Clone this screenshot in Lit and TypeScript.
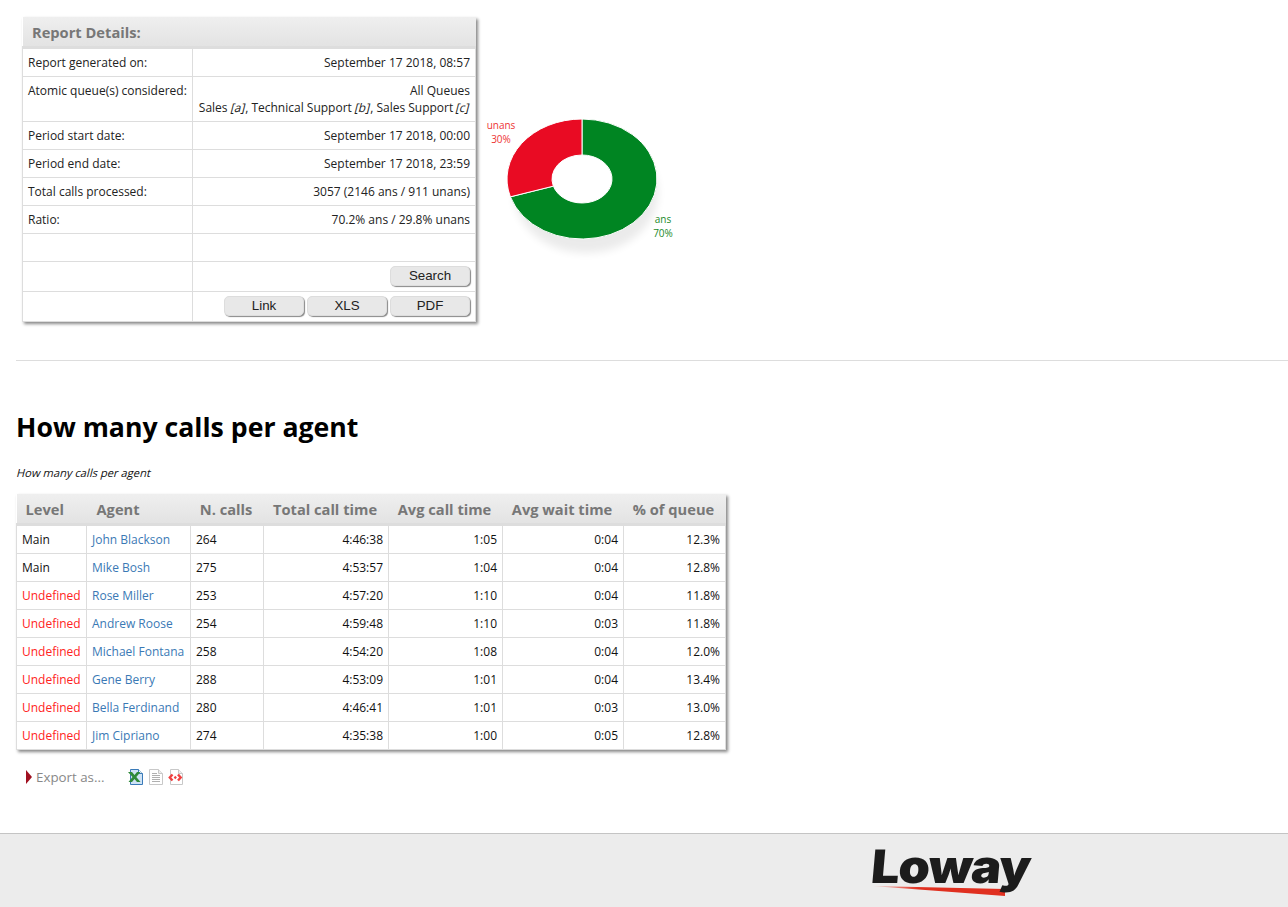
import { LitElement, html, css, svg } from "lit";
import { customElement } from "lit/decorators.js";

const details = [
  ["Report generated on:", "September 17 2018, 08:57"],
  ["Period start date:", "September 17 2018, 00:00"],
  ["Period end date:", "September 17 2018, 23:59"],
  ["Total calls processed:", "3057 (2146 ans / 911 unans)"],
  ["Ratio:", "70.2% ans / 29.8% unans"],
];
const agents = [
  ["Main", "John Blackson", "264", "4:46:38", "1:05", "0:04", "12.3%"],
  ["Main", "Mike Bosh", "275", "4:53:57", "1:04", "0:04", "12.8%"],
  ["Undefined", "Rose Miller", "253", "4:57:20", "1:10", "0:04", "11.8%"],
  ["Undefined", "Andrew Roose", "254", "4:59:48", "1:10", "0:03", "11.8%"],
  ["Undefined", "Michael Fontana", "258", "4:54:20", "1:08", "0:04", "12.0%"],
  ["Undefined", "Gene Berry", "288", "4:53:09", "1:01", "0:04", "13.4%"],
  ["Undefined", "Bella Ferdinand", "280", "4:46:41", "1:01", "0:03", "13.0%"],
  ["Undefined", "Jim Cipriano", "274", "4:35:38", "1:00", "0:05", "12.8%"],
];

@customElement("app-root")
export class AppRoot extends LitElement {
  static styles = css`
    :host { display: block; font-family: "Open Sans", sans-serif; font-size: 12px; color: #222; background: #fff; min-height: 907px; position: relative; }
    .top { display: flex; align-items: flex-start; padding: 17px 0 0 22px; height: 360px; box-sizing: border-box; }
    table { border-collapse: collapse; table-layout: fixed; box-shadow: 2px 2px 3px #888; background: #fff; }
    .report { width: 454px; flex: none; }
    .report .c1 { width: 170px; }
    th { background: linear-gradient(#efefef, #e3e3e3); color: #777; font-weight: 700; border-bottom: 3px solid #ddd; text-align: left; padding: 0; }
    td { border: 1px solid #ddd; padding: 0 5px; height: 27px; line-height: 17px; box-sizing: content-box; }
    .report th { font-size: 14.67px; height: 29px; padding-left: 9.500px; }
    .report td { vertical-align: middle; }
    .report .multi td { height: 44px; vertical-align: top; }
    .multi .inner { padding-top: 5px; }
    .r { text-align: right; }
    .slant { display: inline-block; transform: skewX(-14deg); }
    .report td.btns { height: 27px; padding: 0 5px 2px 0; }
    .btnrow { display: flex; justify-content: flex-end; gap: 3px; }
    button { font-family: "Liberation Sans", sans-serif; font-size: 13.33px; color: #222; height: 20px; padding: 0; border: 1px solid #ddd; border-radius: 5px; background: #e8e8e8; box-shadow: 1px 1px 1px #888; width: 80px; line-height: 16px; }
    .chart { display: block; margin-left: 4px; margin-top: 83px; flex: none; }
    .chart text { font-family: "Open Sans", sans-serif; font-size: 10px; text-anchor: middle; }
    .unans { fill: #e33; }
    .ans { fill: #1a8a2a; }
    hr { border: 0; border-top: 1px solid #ddd; margin: 0 0 0 16px; }
    h2 { font-size: 26.67px; line-height: 36px; font-weight: 700; color: #000; margin: 48px 0 0 16px; }
    .sub { font-size: 11.2px; color: #111; margin: 20px 0 0 17px; line-height: 16px; }
    .agents { width: 709px; margin: 13px 0 0 16px; }
    .agents th { height: 29px; font-size: 14.67px; text-align: center; padding: 0 2px 0 0; }
    .agents th.left { text-align: left; padding: 0 0 0 10px; }
    .agents th.lvl { text-align: left; padding: 0 0 0 9px; }
    .agents td { color: #111; }
    .w1 { width: 70px; } .w2 { width: 104px; } .w3 { width: 73px; } .w4 { width: 125px; } .w5 { width: 114px; } .w6 { width: 121px; } .w7 { width: 102px; }
    .undef { color: #f22 !important; }
    a { color: #3a79b5; text-decoration: none; }
    .export { display: flex; align-items: center; margin: 17px 0 0 26px; height: 20px; color: #888; font-size: 13.33px; }
    .tri { width: 0; height: 0; border-left: 6px solid #a01020; border-top: 7px solid transparent; border-bottom: 7px solid transparent; margin-right: 4px; }
    .icons { display: flex; gap: 4px; margin-left: 24px; }
    .icons svg { display: block; }
    footer { position: absolute; left: 0; right: 0; top: 833px; height: 74px; box-sizing: border-box; background: #ececec; border-top: 1px solid #c4c4c4; padding-left: 870px; }
    .logo { position: relative; width: 170px; height: 70px; }
    .logo svg { position: absolute; left: 0; top: 0; }
    .logo span { position: absolute; left: -1px; top: 3px; font-family: "Inter", "Liberation Sans", sans-serif; font-weight: 900; font-size: 46px; line-height: 58px; letter-spacing: -1.2px; color: #1c1c1c; transform: skewX(-5deg) scaleX(1.1); transform-origin: 0 100%; }
  `;

  private donut() {
    const cx = 102, cy = 79;
    const pt = (t: number, rx: number, ry: number) => {
      const a = (t * Math.PI) / 180;
      return `${(cx + rx * Math.sin(a)).toFixed(2)} ${(cy - ry * Math.cos(a)).toFixed(2)}`;
    };
    const seg = (a: number, b: number, large: number) =>
      `M${pt(a, 75, 60)} A75 60 0 ${large} 1 ${pt(b, 75, 60)} L${pt(b, 30, 24)} A30 24 0 ${large} 0 ${pt(a, 30, 24)} Z`;
    const end = 252.7;
    return svg`
      <defs><filter id="b" x="-20%" y="-20%" width="140%" height="140%"><feGaussianBlur stdDeviation="4"/></filter></defs>
      <ellipse cx="${cx + 4}" cy="${cy + 14}" rx="72" ry="60" fill="#000" opacity=".08" filter="url(#b)"/>
      <ellipse cx="${cx}" cy="${cy}" rx="30" ry="24" fill="#fff"/>
      <path d="${seg(0, end, 1)}" fill="#008522" stroke="#fff" stroke-width="1"/>
      <path d="${seg(end, 360, 0)}" fill="#e90b23" stroke="#fff" stroke-width="1"/>
      <text class="unans" x="21" y="29">unans</text>
      <text class="unans" x="21" y="43">30%</text>
      <text class="ans" x="183" y="123">ans</text>
      <text class="ans" x="183" y="137">70%</text>
    `;
  }

  render() {
    return html`
      <div class="top">
        <table class="report">
          <colgroup><col class="c1" /><col /></colgroup>
          <tr><th colspan="2">Report Details:</th></tr>
          <tr><td>${details[0][0]}</td><td class="r">${details[0][1]}</td></tr>
          <tr class="multi">
            <td><div class="inner">Atomic queue(s) considered:</div></td>
            <td class="r"><div class="inner">All Queues<br />Sales <span class="slant">[a]</span>, Technical Support <span class="slant">[b]</span>, Sales Support <span class="slant">[c]</span></div></td>
          </tr>
          ${details.slice(1).map((d) => html`<tr><td>${d[0]}</td><td class="r">${d[1]}</td></tr>`)}
          <tr><td></td><td></td></tr>
          <tr><td class="btns"></td><td class="btns"><div class="btnrow"><button>Search</button></div></td></tr>
          <tr><td class="btns"></td><td class="btns"><div class="btnrow"><button>Link</button><button>XLS</button><button>PDF</button></div></td></tr>
        </table>
        <svg class="chart" width="210" height="170" viewBox="0 0 210 170">${this.donut()}</svg>
      </div>
      <hr />
      <h2>How many calls per agent</h2>
      <div class="sub"><span class="slant">How many calls per agent</span></div>
      <table class="agents">
        <colgroup><col class="w1" /><col class="w2" /><col class="w3" /><col class="w4" /><col class="w5" /><col class="w6" /><col class="w7" /></colgroup>
        <tr><th class="lvl">Level</th><th class="left">Agent</th><th>N. calls</th><th>Total call time</th><th>Avg call time</th><th>Avg wait time</th><th>% of queue</th></tr>
        ${agents.map(
          (a) => html`<tr>
            <td class="${a[0] === "Undefined" ? "undef" : ""}">${a[0]}</td>
            <td><a href="#">${a[1]}</a></td>
            <td>${a[2]}</td>
            <td class="r">${a[3]}</td><td class="r">${a[4]}</td><td class="r">${a[5]}</td><td class="r">${a[6]}</td>
          </tr>`
        )}
      </table>
      <div class="export">
        <span class="tri"></span>Export as...
        <span class="icons">
          <svg width="16" height="16" viewBox="0 0 16 16"><path d="M2.500.500h8l4 4v11h-12z" fill="#cfe3f6" stroke="#3a7ab8"/><path d="M10.500.500v4h4" fill="#fff" stroke="#3a7ab8"/><path d="M0 3h4l2.500 3L9 3h3.500L8.300 8 12.500 13H9L6.500 10 4 13H.5l4-5z" fill="#2f8a3a"/></svg>
          <svg width="16" height="16" viewBox="0 0 16 16"><path d="M1.500.500h9l4 4v11h-13z" fill="#fff" stroke="#c8c8c8"/><path d="M10.500.500v4h4" fill="#eee" stroke="#c8c8c8"/><path d="M4 4.500h5M4 6.500h8M4 8.500h8M4 10.500h8M4 12.500h8" stroke="#b0b0b0" fill="none"/></svg>
          <svg width="16" height="16" viewBox="0 0 16 16"><path d="M2.500.500h8l4 4v11h-12z" fill="#fff" stroke="#c8c8c8"/><path d="M10.500.500v4h4" fill="#eee" stroke="#c8c8c8"/><path d="M4.500 5.500L1.800 8.500l2.700 3M10 5.500l2.700 3-2.700 3" fill="none" stroke="#f04040" stroke-width="2.400"/><path d="M5.700 8.500L7.300 6.700 8.900 8.500 7.300 10.300z" fill="#f04040"/></svg>
        </span>
      </div>
      <footer>
        <div class="logo">
          <svg width="170" height="70" viewBox="0 0 170 70"><defs><linearGradient id="sw"><stop offset="0" stop-color="#e32" stop-opacity=".1"/><stop offset=".35" stop-color="#e03020"/></linearGradient></defs><path d="M2 52L135 55V62z" fill="url(#sw)"/></svg>
          <span>Loway</span>
        </div>
      </footer>
    `;
  }
}
